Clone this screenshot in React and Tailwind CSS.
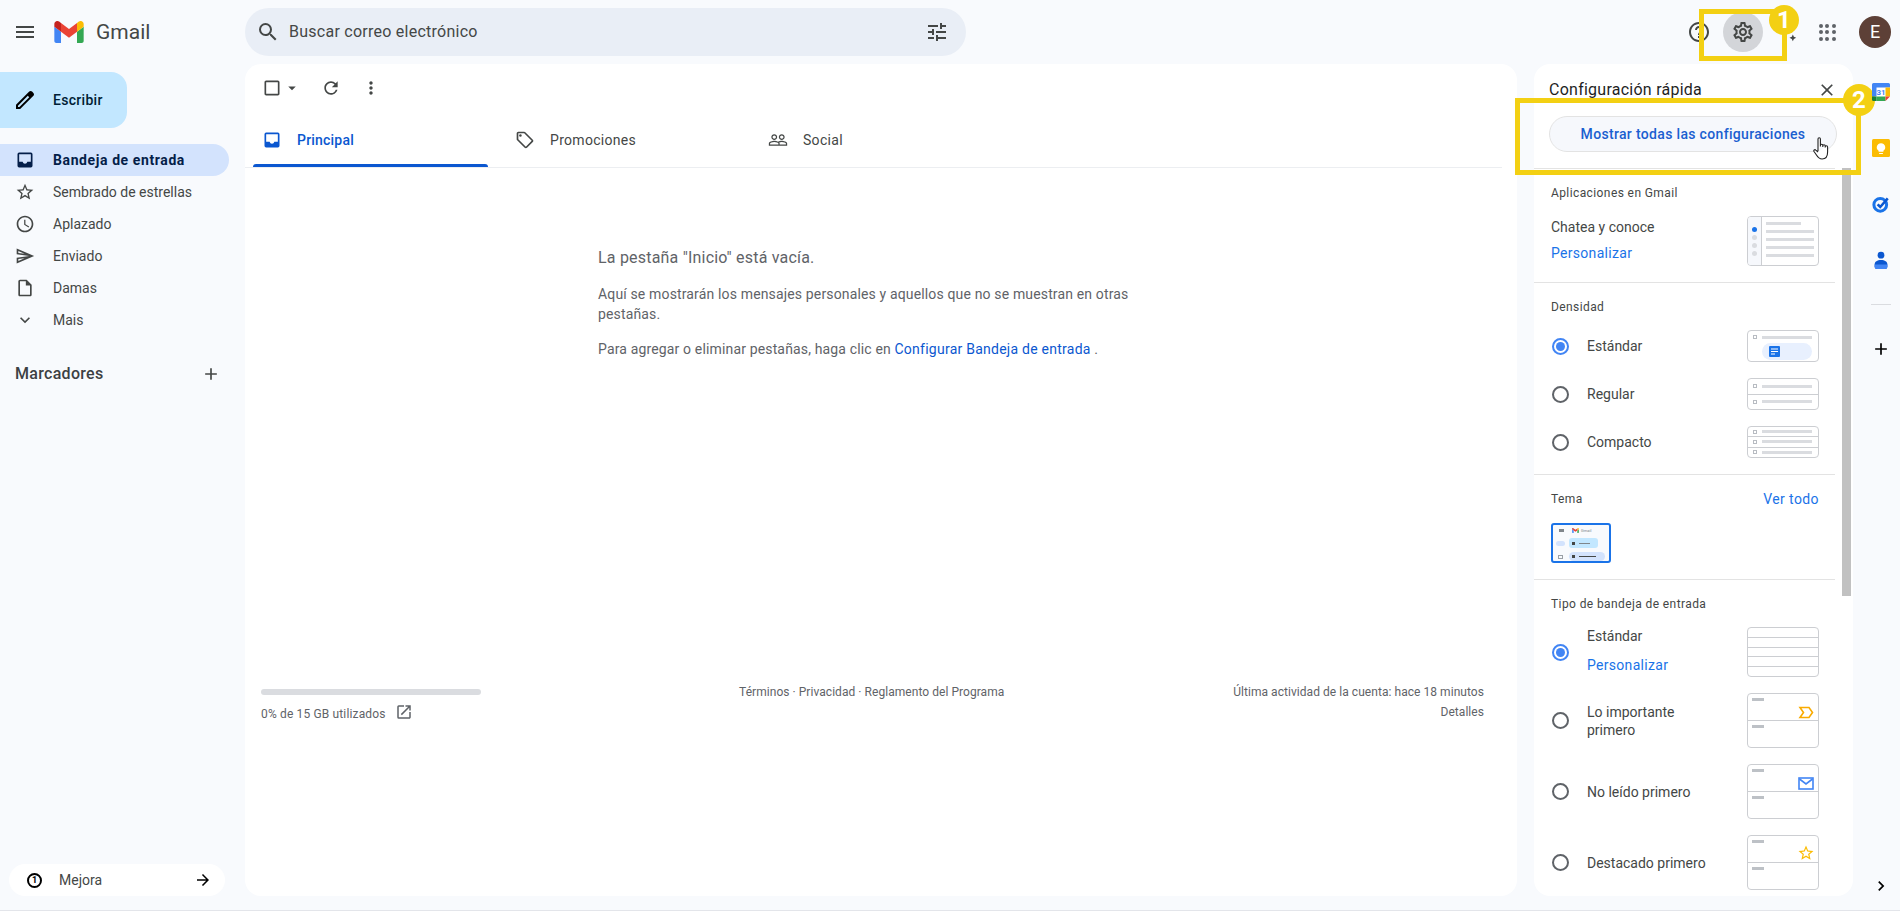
import React from "react";
import {
  MdMenu,
  MdSearch,
  MdTune,
  MdOutlineSettings,
  MdHelpOutline,
  MdOutlineAutoAwesome,
  MdStarBorder,
  MdAccessTime,
  MdOutlineSend,
  MdOutlineInsertDriveFile,
  MdExpandMore,
  MdAdd,
  MdCheckBoxOutlineBlank,
  MdArrowDropDown,
  MdRefresh,
  MdMoreVert,
  MdOutlineLocalOffer,
  MdPeopleOutline,
  MdOpenInNew,
  MdClose,
  MdArrowForward,
  MdChevronRight,
} from "react-icons/md";

function GmailLogo({ className }) {
  return (
    <svg viewBox="52 42 88 66" className={className}>
      <path fill="#4285f4" d="M58 108h14V74L52 59v43c0 3.32 2.69 6 6 6" />
      <path fill="#34a853" d="M120 108h14c3.32 0 6-2.69 6-6V59l-20 15" />
      <path fill="#fbbc04" d="M120 48v26l20-15v-8c0-7.42-8.47-11.65-14.4-7.2" />
      <path fill="#ea4335" d="M72 74V48l24 18 24-18v26L96 92" />
      <path fill="#c5221f" d="M52 51v8l20 15V48l-5.6-4.2c-5.94-4.45-14.4-.22-14.4 7.2" />
    </svg>
  );
}

function InboxIcon({ className }) {
  return (
    <svg viewBox="0 0 24 24" className={className} fill="currentColor">
      <path
        fillRule="evenodd"
        d="M3 5a2 2 0 0 1 2-2h14a2 2 0 0 1 2 2v14a2 2 0 0 1-2 2H5a2 2 0 0 1-2-2zM5 5v9h4.2c.4 1.5 1.4 2.4 2.8 2.4s2.4-.9 2.8-2.4H19V5z"
      />
    </svg>
  );
}

function AppsGrid() {
  const dots = [0, 1, 2, 3, 4, 5, 6, 7, 8];
  return (
    <span className="grid grid-cols-3 gap-[2.5px]">
      {dots.map((d) => (
        <span key={d} className="h-1 w-1 rounded-full bg-[#5f6368]" />
      ))}
    </span>
  );
}

function NavRow({ icon: Icon, label, active }) {
  return (
    <div
      className={
        active
          ? "flex h-8 w-[229px] items-center rounded-r-full bg-[#d3e3fd] pl-[15px] text-sm font-bold tracking-[0.6px] text-[#041e49]"
          : "flex h-8 w-[229px] items-center pl-[15px] text-sm text-[#444746]"
      }
    >
      <Icon className="h-5 w-5 shrink-0" />
      <span className="ml-[18px]">{label}</span>
    </div>
  );
}

function Sidebar() {
  return (
    <aside className="flex w-[245px] shrink-0 flex-col">
      <div className="mt-2 flex h-14 w-[127px] items-center rounded-r-2xl bg-[#c2e7ff] pl-[13px] text-sm font-medium tracking-[0.3px] text-[#001d35]">
        <svg viewBox="0 0 24 24" className="h-6 w-6 text-black" fill="currentColor">
          <path d="M20.41 4.94l-1.35-1.35c-.78-.78-2.05-.78-2.83 0L3 16.82V21h4.18L20.41 7.77c.79-.78.79-2.05 0-2.83zM6.41 19.06L5 19v-1.36l9.82-9.82 1.41 1.41-9.82 9.83z" />
        </svg>
        <span className="ml-4">Escribir</span>
      </div>
      <nav className="mt-4 flex flex-col">
        <NavRow icon={InboxIcon} label="Bandeja de entrada" active />
        <NavRow icon={MdStarBorder} label="Sembrado de estrellas" />
        <NavRow icon={MdAccessTime} label="Aplazado" />
        <NavRow icon={MdOutlineSend} label="Enviado" />
        <NavRow icon={MdOutlineInsertDriveFile} label="Damas" />
        <NavRow icon={MdExpandMore} label="Mais" />
      </nav>
      <div className="mt-[25px] flex h-[26px] w-[221px] items-center justify-between pl-[15px] text-base font-medium tracking-[0.3px] text-[#3c4043]">
        <span>Marcadores</span>
        <MdAdd className="h-5 w-5 text-[#444746]" />
      </div>
      <div className="mt-auto ml-[9px] flex h-8 w-[216px] items-center rounded-full bg-white pl-[18px] pr-[13px] text-sm text-[#444746]">
        <span className="flex h-[15px] w-[15px] items-center justify-center rounded-full border-2 border-black text-[9px] font-bold text-black">
          1
        </span>
        <span className="ml-[17px]">Mejora</span>
        <MdArrowForward className="ml-auto h-[18px] w-[18px] text-black" />
      </div>
    </aside>
  );
}

function Tab({ icon: Icon, label, active }) {
  return (
    <div
      className={
        active
          ? "relative flex h-full w-[253px] items-center gap-[15px] pl-[9px] text-sm font-medium tracking-[0.2px] text-[#0b57d0]"
          : "flex h-full w-[253px] items-center gap-[15px] pl-[9px] text-sm tracking-[0.3px] text-[#444746]"
      }
    >
      <Icon className="h-5 w-5" />
      <span>{label}</span>
      {active && <span className="absolute bottom-0 left-0 h-[3px] w-[235px] rounded-t-[3px] bg-[#0b57d0]" />}
    </div>
  );
}

function MainPanel() {
  return (
    <main className="flex w-[1272px] shrink-0 flex-col rounded-2xl bg-white">
      <div className="flex h-12 items-center pl-[17px] text-[#444746]">
        <MdCheckBoxOutlineBlank className="h-5 w-5" />
        <MdArrowDropDown className="ml-px h-[18px] w-[18px]" />
        <MdRefresh className="ml-[20px] h-5 w-5" />
        <MdMoreVert className="ml-5 h-5 w-5" />
      </div>
      <div className="flex h-14 w-[1257px] border-b border-[#eceef1] pl-2">
        <Tab icon={InboxIcon} label="Principal" active />
        <Tab icon={MdOutlineLocalOffer} label="Promociones" />
        <Tab icon={MdPeopleOutline} label="Social" />
      </div>
      <div className="ml-[353px] mt-[78px] w-[540px] text-sm tracking-[0.15px] text-[#5f6368]">
        <h2 className="text-base leading-6 tracking-[0.2px] text-[#5f6368]">La pestaña "Inicio" está vacía.</h2>
        <p className="mt-[14px] leading-5">
          Aquí se mostrarán los mensajes personales y aquellos que no se muestran en otras pestañas.
        </p>
        <p className="mt-[15px] leading-5">
          Para agregar o eliminar pestañas, haga clic en{" "}
          <span className="tracking-[0.25px] text-[#0b57d0]">Configurar Bandeja de entrada</span> .
        </p>
      </div>
      <footer className="mt-[323px] flex pl-4 pr-[33px] text-xs text-[#5f6368]">
        <div className="w-[220px] pt-[7px]">
          <div className="h-1.5 rounded-full bg-[#dadce0]" />
          <div className="mt-[9px] flex items-center leading-5 tracking-[0.15px]">
            <span>0% de 15 GB utilizados</span>
            <MdOpenInNew className="-mt-1 ml-[9px] h-[18px] w-[18px]" />
          </div>
        </div>
        <div className="ml-[258px] leading-5 tracking-[0.05px]">Términos · Privacidad · Reglamento del Programa</div>
        <div className="ml-auto text-right leading-5 tracking-[0.05px]">
          <div>Última actividad de la cuenta: hace 18 minutos</div>
          <div>Detalles</div>
        </div>
      </footer>
    </main>
  );
}

function Radio({ checked }) {
  return (
    <span
      className={
        checked
          ? "ml-px flex h-[17px] w-[17px] shrink-0 items-center justify-center rounded-full border-2 border-[#4285f4]"
          : "ml-px h-[17px] w-[17px] shrink-0 rounded-full border-2 border-[#5f6368]"
      }
    >
      {checked && <span className="h-[9px] w-[9px] rounded-full bg-[#4285f4]" />}
    </span>
  );
}

function Thumb({ className, children }) {
  return (
    <div className={"w-[72px] shrink-0 overflow-hidden rounded-[4px] border border-[#ccced2] bg-white " + className}>
      {children}
    </div>
  );
}

function DensityRow() {
  return (
    <div className="flex flex-1 items-center pl-[5px] pr-1.5">
      <span className="h-1 w-1 shrink-0 border border-[#b8bcc2]" />
      <span className="ml-[5px] h-[3px] flex-1 bg-[#dadce0]" />
    </div>
  );
}

function MailRow({ children, last }) {
  return (
    <div className={last ? "flex flex-1 justify-between pl-1 pr-1 pt-1" : "flex flex-1 justify-between border-b border-[#ccced2] pl-1 pr-1 pt-1"}>
      <span className="h-[3px] w-3 bg-[#bdc1c6]" />
      {children}
    </div>
  );
}

function SectionLabel({ children }) {
  return <h3 className="text-xs leading-4 tracking-[0.4px] text-[#444746]">{children}</h3>;
}

function DensitySection() {
  const rows = [
    {
      label: "Estándar",
      checked: true,
      thumb: (
        <Thumb className="flex h-8 flex-col pl-[5px] pr-1.5 pt-1">
          <div className="flex items-center">
            <span className="h-1 w-1 shrink-0 border border-[#b8bcc2]" />
            <span className="ml-[5px] h-[3px] flex-1 bg-[#dadce0]" />
          </div>
          <div className="ml-[9px] mt-1 flex h-[17px] items-center rounded-full bg-[#e8f0fe] pl-[7px]">
            <svg viewBox="0 0 11 11" className="h-[11px] w-[11px]">
              <rect width="11" height="11" rx="1" fill="#1a73e8" />
              <path d="M2 3h7M2 5.5h7M2 8h4" stroke="#fff" strokeWidth="1" />
            </svg>
          </div>
        </Thumb>
      ),
    },
    {
      label: "Regular",
      thumb: (
        <Thumb className="flex h-8 flex-col divide-y divide-[#ccced2]">
          <DensityRow />
          <DensityRow />
        </Thumb>
      ),
    },
    {
      label: "Compacto",
      thumb: (
        <Thumb className="flex h-8 flex-col divide-y divide-[#ccced2]">
          <DensityRow />
          <DensityRow />
          <DensityRow />
        </Thumb>
      ),
    },
  ];
  return (
    <section className="border-t border-[#e3e3e3] pb-4 pl-[17px] pr-4 pt-4">
      <SectionLabel>Densidad</SectionLabel>
      <div className="mt-[15px] flex flex-col gap-4">
        {rows.map((r) => (
          <div key={r.label} className="flex items-center">
            <Radio checked={r.checked} />
            <span className="ml-[18px] flex-1 text-sm text-[#444746]">{r.label}</span>
            {r.thumb}
          </div>
        ))}
      </div>
    </section>
  );
}

function QuickSettings() {
  return (
    <div className="flex w-[319px] shrink-0 flex-col overflow-hidden rounded-2xl bg-white">
      <div className="flex items-center justify-between pl-[15px] pr-4 pt-[14px]">
        <span className="text-base leading-6 tracking-[0.25px] text-[#1f1f1f]">Configuración rápida</span>
        <MdClose className="h-5 w-5 text-[#444746]" />
      </div>
      <div className="ml-[15px] mt-[14px] flex h-9 w-[288px] items-center justify-center rounded-full border border-[#e3e3e3] bg-[#f6f8fc] text-sm font-medium tracking-[0.33px] text-[#1a5fd0]">
        Mostrar todas las configuraciones
      </div>
      <div className="mt-4 flex min-h-0 flex-1">
        <div className="w-[301px] shrink-0">
          <section className="border-t border-[#e3e3e3] pb-4 pl-[17px] pr-4 pt-4">
            <SectionLabel>Aplicaciones en Gmail</SectionLabel>
            <div className="mt-[15px] flex justify-between">
              <div className="pt-px text-sm leading-5">
                <div className="text-[#444746]">Chatea y conoce</div>
                <div className="mt-1.5 tracking-[0.3px] text-[#1a73e8]">Personalizar</div>
              </div>
              <Thumb className="flex h-[50px]">
                <div className="flex w-[14px] flex-col items-center gap-[3px] border-r border-[#ccced2] bg-[#f6f8fc] pt-[10px]">
                  <span className="h-[5px] w-[5px] rounded-full bg-[#1a73e8]" />
                  <span className="h-[5px] w-[5px] rounded-full bg-[#dadce0]" />
                  <span className="h-[5px] w-[5px] rounded-full bg-[#dadce0]" />
                  <span className="h-[5px] w-[5px] rounded-full bg-[#dadce0]" />
                </div>
                <div className="flex flex-1 flex-col gap-[5px] pl-1 pr-[4px] pt-[5px]">
                  <span className="h-[3px] w-[35px] bg-[#dadce0]" />
                  <span className="h-[3px] bg-[#dadce0]" />
                  <span className="h-[3px] bg-[#dadce0]" />
                  <span className="h-[3px] bg-[#dadce0]" />
                  <span className="h-[3px] bg-[#dadce0]" />
                </div>
              </Thumb>
            </div>
          </section>

          <DensitySection />

          <section className="border-t border-[#e3e3e3] pb-4 pl-[17px] pr-4 pt-[14px]">
            <div className="flex items-center justify-between">
              <h3 className="text-xs leading-5 tracking-[0.4px] text-[#444746]">Tema</h3>
              <span className="text-sm leading-5 tracking-[0.4px] text-[#1a73e8]">Ver todo</span>
            </div>
            <div className="mt-[14px] flex h-10 w-[60px] flex-col gap-[4px] rounded-[3px] border-2 border-[#1a73e8] bg-[#f8fafd] pl-[3px] pr-1 pt-[2px]">
              <div className="flex h-[8px] items-center">
                <span className="ml-[3px] h-[3px] w-[5px] bg-[#80868b]" />
                <GmailLogo className="ml-[8px] h-[5px] w-[7px]" />
                <span className="ml-[2px] text-[4px] leading-none text-[#80868b]">Gmail</span>
              </div>
              <div className="flex h-[10px] items-center">
                <span className="h-[5px] w-[9px] rounded-full bg-[#d3e3fd]" />
                <span className="ml-[4px] flex h-[10px] w-[29px] items-center rounded-[3px] bg-[#c2e7ff] pl-[3px]">
                  <span className="h-[3px] w-[3px] bg-[#444746]" />
                  <span className="ml-1 h-px w-[11px] bg-[#80868b]" />
                </span>
              </div>
              <div className="flex h-[9px] items-center">
                <span className="ml-[2px] h-[4px] w-[5px] border border-[#9aa0a6]" />
                <span className="ml-[6px] flex h-[9px] w-[36px] items-center rounded-full bg-[#d3e3fd] pl-[3px]">
                  <span className="h-[3px] w-[3px] bg-[#444746]" />
                  <span className="ml-1 h-px w-[17px] bg-[#444746]" />
                </span>
              </div>
            </div>
          </section>

          <section className="border-t border-[#e3e3e3] pl-[17px] pr-4 pt-4">
            <SectionLabel>Tipo de bandeja de entrada</SectionLabel>
            <div className="mt-[15px] flex flex-col gap-4 text-sm text-[#444746]">
              <div className="flex items-center">
                <Radio checked />
                <div className="ml-[18px] -mt-[3px] flex flex-1 flex-col gap-[9px] leading-5">
                  <span>Estándar</span>
                  <span className="tracking-[0.3px] text-[#1a73e8]">Personalizar</span>
                </div>
                <Thumb className="flex h-[50px] flex-col divide-y divide-[#ccced2]">
                  <span className="flex-1" />
                  <span className="flex-1" />
                  <span className="flex-1" />
                  <span className="flex-1" />
                  <span className="flex-1" />
                </Thumb>
              </div>
              <div className="flex items-center">
                <Radio />
                <span className="ml-[18px] w-[110px] flex-1 leading-[18px]">
                  Lo importante
                  <br />
                  primero
                </span>
                <Thumb className="flex h-[55px] flex-col">
                  <MailRow>
                    <svg viewBox="0 0 16 13" className="mt-2 h-[13px] w-4" fill="none" stroke="#f9ab00" strokeWidth="1.6">
                      <path d="M2 1.5h9l3.5 5-3.5 5H2l3.5-5z" />
                    </svg>
                  </MailRow>
                  <MailRow last />
                </Thumb>
              </div>
              <div className="flex items-center">
                <Radio />
                <span className="ml-[18px] flex-1">No leído primero</span>
                <Thumb className="flex h-[55px] flex-col">
                  <MailRow>
                    <svg viewBox="0 0 16 13" className="mt-2 h-[13px] w-4" fill="none" stroke="#4285f4" strokeWidth="1.6">
                      <rect x="1" y="1" width="14" height="11" />
                      <path d="M1.5 2l6.5 5 6.5-5" />
                    </svg>
                  </MailRow>
                  <MailRow last />
                </Thumb>
              </div>
              <div className="flex items-center">
                <Radio />
                <span className="ml-[18px] flex-1">Destacado primero</span>
                <Thumb className="flex h-[55px] flex-col">
                  <MailRow>
                    <MdStarBorder className="-mr-px mt-1 h-[18px] w-[18px] text-[#fbbc04]" />
                  </MailRow>
                  <MailRow last />
                </Thumb>
              </div>
            </div>
          </section>
        </div>
        <div className="ml-[7px] h-[428px] w-[9px] shrink-0 bg-[#c1c1c1]" />
      </div>
    </div>
  );
}

function SideRail() {
  return (
    <div className="flex flex-1 flex-col items-center pl-[9px] pt-[19px]">
      <svg viewBox="0 0 24 24" className="relative z-10 h-[18px] w-[18px]">
        <rect x="5" y="5" width="14" height="14" fill="#fff" />
        <path fill="#4285f4" d="M2 0h20a2 2 0 0 1 2 2v4H6v12H0V2a2 2 0 0 1 2-2z" />
        <path fill="#fbbc04" d="M18 6h6v12h-6z" />
        <path fill="#34a853" d="M6 18h12v6H6z" />
        <path fill="#188038" d="M0 18h6v6H2a2 2 0 0 1-2-2z" />
        <path fill="#ea4335" d="M18 18h6l-6 6z" />
        <text x="12" y="16" textAnchor="middle" fontSize="10.5" fontWeight="700" fontFamily="Roboto" fill="#4285f4">31</text>
      </svg>
      <svg viewBox="0 0 24 24" className="mt-[38px] h-[18px] w-[18px]">
        <rect width="24" height="24" rx="2" fill="#fbbc04" />
        <path fill="#fff" d="M9.5 18.5h5V20h-5zM12 5.5a5.6 5.6 0 0 0-3.2 10.2v1.3h6.4v-1.3A5.6 5.6 0 0 0 12 5.5z" />
      </svg>
      <svg viewBox="0 0 24 24" className="mt-[38px] h-[18px] w-[18px]" fill="none">
        <circle cx="11" cy="13" r="8.5" stroke="#1a73e8" strokeWidth="4" />
        <path d="M7.5 12.5l3.5 3.5L21 4.5" stroke="#0b57d0" strokeWidth="3.4" />
      </svg>
      <svg viewBox="0 0 24 24" className="mt-[38px] h-[18px] w-[18px]">
        <circle cx="12" cy="5.5" r="4.5" fill="#0b57d0" />
        <path fill="#0b57d0" d="M12 12c-5 0-8.5 2-8.5 6v3a3 3 0 0 0 3 3h11a3 3 0 0 0 3-3v-3c0-4-3.5-6-8.500-6z" />
        <path fill="#4285f4" d="M3.500 18h17v3a3 3 0 0 1-3 3h-11a3 3 0 0 1-3-3z" />
      </svg>
      <div className="mt-[35px] h-px w-5 bg-[#dadce0]" />
      <MdAdd className="mt-[34px] h-5 w-5 text-black" />
      <MdChevronRight className="mt-auto h-5 w-5 text-black" />
    </div>
  );
}

export default function App() {
  return (
    <div className="relative flex h-[911px] w-[1900px] flex-col overflow-hidden bg-[#f8fafd] font-['Roboto',sans-serif]">
      <header className="flex h-16 shrink-0 items-center pr-[9px]">
        <div className="flex w-[245px] shrink-0 items-center">
          <MdMenu className="ml-[13px] h-6 w-6 text-[#444746]" />
          <GmailLogo className="ml-[17px] h-[22px] w-[30px]" />
          <span className="ml-[12px] text-[21px] leading-none text-[#444746]">Gmail</span>
        </div>
        <div className="flex h-12 w-[721px] items-center rounded-full bg-[#e9eef6] pl-[11px] pr-[17px] text-[#444746]">
          <MdSearch className="h-6 w-6" />
          <span className="ml-[9px] text-base tracking-[0.25px]">Buscar correo electrónico</span>
          <MdTune className="ml-auto h-6 w-6" />
        </div>
        <div className="ml-auto flex items-center text-[#444746]">
          <span className="flex h-10 w-10 items-center justify-center">
            <MdHelpOutline className="h-6 w-6" />
          </span>
          <span className="ml-1 flex h-10 w-10 items-center justify-center rounded-full bg-[#d3d5d9]">
            <MdOutlineSettings className="h-6 w-6" />
          </span>
          <span className="ml-1 flex h-10 w-10 items-center justify-center">
            <MdOutlineAutoAwesome className="h-5 w-5" />
          </span>
          <span className="flex h-10 w-10 items-center justify-center">
            <AppsGrid />
          </span>
          <span className="ml-3 flex h-8 w-8 items-center justify-center rounded-full bg-[#5d4037] text-lg text-white">E</span>
        </div>
      </header>

      <div className="flex h-[832px] shrink-0">
        <Sidebar />
        <MainPanel />
        <div className="w-[17px] shrink-0" />
        <QuickSettings />
        <SideRail />
      </div>
      <div className="mt-[14px] h-px bg-[#e3e5ea]" />

      {/* tutorial annotations over the page */}
      <div className="absolute left-[1699px] top-[9px] h-[52px] w-[88px] border-[5px] border-[#f3d013]" />
      <div className="absolute left-[1515px] top-[98px] h-[77px] w-[346px] border-[5px] border-[#f3d013]" />
      <div className="absolute left-[1769px] top-[5px] flex h-[30px] w-[30px] items-center justify-center rounded-full bg-[#f3d013] text-2xl font-bold text-white">
        1
      </div>
      <div className="absolute left-[1843px] top-[84px] flex h-8 w-8 items-center justify-center rounded-full bg-[#f3d013] text-2xl font-bold text-white">
        2
      </div>
      <svg viewBox="0 0 17 23" className="absolute left-[1813px] top-[137px] h-[23px] w-[17px]" fill="#fff" stroke="#222" strokeWidth="1.1">
        <path d="M5 14V2a1.2 1.2 0 0 1 2.400 0v7.500M7.400 8.500a1.200 1.200 0 0 1 2.400 0v1.500M9.800 9a1.200 1.200 0 0 1 2.400 0v1.500M12.200 10a1.200 1.200 0 0 1 2.400 0v5c0 4-2 7-5.500 7-3 0-4.500-2-6-4.500L1 14.500c-.7-1.200.8-2.400 1.800-1.400L5 15" />
      </svg>
    </div>
  );
}
